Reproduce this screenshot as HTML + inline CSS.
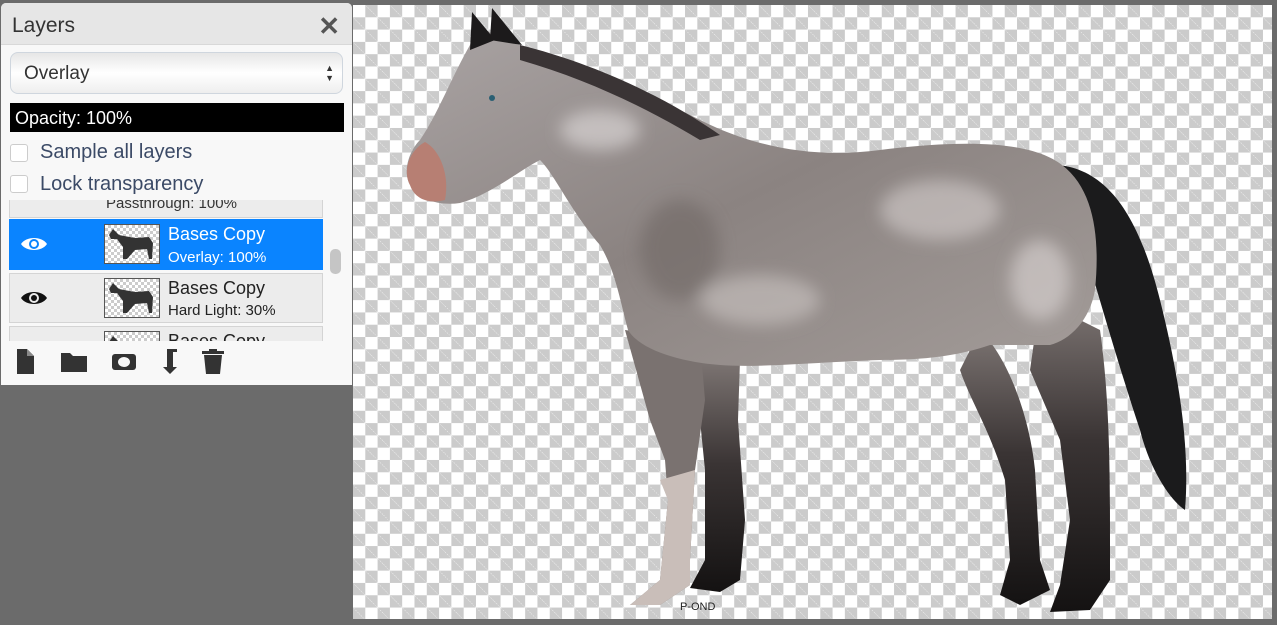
<!DOCTYPE html>
<html><head><meta charset="utf-8"><style>
body{margin:0;width:1277px;height:625px;background:#6b6b6b;position:relative;overflow:hidden;font-family:"Liberation Sans",sans-serif}
#cv{position:absolute;left:353px;top:5px;width:919px;height:614px;background-color:#fff;background-image:linear-gradient(45deg,#cbcbcb 25%,transparent 25%,transparent 75%,#cbcbcb 75%),linear-gradient(45deg,#cbcbcb 25%,transparent 25%,transparent 75%,#cbcbcb 75%);background-size:24.6px 24.6px;background-position:0 0,12.3px 12.3px}
#panel{position:absolute;left:1px;top:3px;width:351px;height:382px;background:#f8f8f8;border-radius:5px 5px 0 0}
#hd{height:41px;background:#e6e6e6;border-radius:5px 5px 0 0;border-bottom:1px solid #d8d8d8}
#hd span{position:absolute;left:11px;top:11px;font-size:21px;color:#333}
#x{position:absolute;right:12px;top:8px;font-size:26px;color:#555;font-weight:bold}
#sel{position:absolute;left:9px;top:49px;width:333px;height:42px;border:1px solid #cfd6de;border-radius:8px;background:linear-gradient(#e6e6e6,#fff 50%,#eee);box-sizing:border-box}
#sel span{position:absolute;left:13px;top:10px;font-size:19px;color:#333}
#sel i{position:absolute;right:8px;top:10px;font-style:normal;font-size:9px;line-height:10px;color:#333}
#op{position:absolute;left:9px;top:100px;width:334px;height:29px;background:#000;color:#fff;font-size:18px;line-height:30px;text-indent:5px}
.cb{position:absolute;left:9px;width:16px;height:16px;border:1px solid #ccc;border-radius:3px;background:#fff}
.cl{position:absolute;left:39px;font-size:20px;color:#3b4a66}
#list{position:absolute;left:8px;top:197px;width:315px;height:141px;overflow:hidden}
.row{position:absolute;left:0;width:314px;height:48px;background:#ececec;border:1px solid #d4d4d4;box-sizing:border-box}
.row.s{background:#0a84ff;border-color:#0a84ff;color:#fff}
.th{position:absolute;left:94px;top:4px;width:56px;height:40px;border:1px solid #555;background-color:#fff;background-image:linear-gradient(45deg,#ccc 25%,transparent 25%,transparent 75%,#ccc 75%),linear-gradient(45deg,#ccc 25%,transparent 25%,transparent 75%,#ccc 75%);background-size:6px 6px;background-position:0 0,3px 3px;box-sizing:border-box}
.th svg{position:absolute;left:0;top:0}
.n{position:absolute;left:158px;top:4px;font-size:18px}
.m{position:absolute;left:158px;top:27px;font-size:15px}
.eye{position:absolute;left:10px;top:15px}
#sb{position:absolute;left:329px;top:246px;width:11px;height:25px;background:#c5c5c5;border-radius:5px}
</style></head><body>
<div id="cv"></div>
<svg style="position:absolute;left:0;top:0" width="1277" height="625">
<defs>
<linearGradient id="bd" x1="0" y1="0" x2="1" y2="1"><stop offset="0" stop-color="#aaa4a4"/><stop offset=".5" stop-color="#8b8381"/><stop offset="1" stop-color="#a39c99"/></linearGradient>
<linearGradient id="lg" x1="0" y1="0" x2="0" y2="1"><stop offset="0" stop-color="#7d7573"/><stop offset=".45" stop-color="#3a3434"/><stop offset="1" stop-color="#141212"/></linearGradient>
<filter id="bl"><feGaussianBlur stdDeviation="8"/></filter>
</defs>
<path d="M1058 165 C1110 170 1140 220 1160 300 C1180 380 1190 450 1185 510 C1170 500 1150 470 1140 430 C1120 370 1100 300 1085 250 Z" fill="#1b1b1c"/>
<path d="M980 330 C1010 360 1030 420 1035 470 L1040 560 L1050 590 L1020 605 L1000 595 L1010 560 L1005 480 C990 430 970 400 960 370 Z" fill="url(#lg)"/>
<path d="M1040 300 L1100 330 C1110 400 1110 480 1110 540 L1110 580 L1090 610 L1050 612 L1060 585 L1070 520 L1060 440 L1030 370 Z" fill="url(#lg)"/>
<path d="M700 360 L740 360 L738 420 L745 520 L740 580 L720 592 L690 588 L705 560 L705 470 L700 420 Z" fill="url(#lg)"/>
<path d="M625 330 L700 340 L705 400 L695 470 L690 560 L690 585 L660 605 L630 605 L660 580 L668 500 L665 460 L650 420 Z" fill="#7a7270"/>
<path d="M660 480 L695 470 L690 560 L690 585 L660 605 L630 605 L660 580 L668 500 Z" fill="#c9beb9"/>
<path d="M470 45 L480 25 L500 40 L520 45 C600 70 660 100 700 120 C760 150 820 158 880 150 C960 140 1030 140 1062 165 C1095 190 1100 240 1095 290 C1090 320 1070 340 1050 345 L990 345 C960 355 930 360 880 360 C820 362 760 368 720 365 C680 362 640 350 628 330 C620 300 615 270 600 245 C570 210 555 175 540 160 C520 170 490 195 460 203 C440 206 418 200 410 185 C402 170 410 150 420 140 C440 110 450 80 470 45 Z" fill="url(#bd)"/>
<g filter="url(#bl)" opacity=".55">
<ellipse cx="600" cy="130" rx="40" ry="20" fill="#e8e4e4"/>
<ellipse cx="940" cy="210" rx="60" ry="30" fill="#d9d3d2"/>
<ellipse cx="760" cy="300" rx="60" ry="25" fill="#d0cac8"/>
<ellipse cx="680" cy="250" rx="40" ry="50" fill="#6e6664"/>
<ellipse cx="1040" cy="280" rx="30" ry="40" fill="#e2dcdb"/>
</g>
<path d="M410 185 C402 170 410 150 425 142 C440 150 450 175 445 200 C430 204 415 200 410 185 Z" fill="#b77f73"/>
<path d="M470 50 L472 12 L495 40 Z" fill="#1c1a1b"/>
<path d="M490 40 L492 8 L522 45 Z" fill="#1c1a1b"/>
<path d="M520 45 C600 65 670 100 720 135 L700 140 C650 110 590 80 520 60 Z" fill="#3a3435"/>
<circle cx="492" cy="98" r="3" fill="#2a5f73"/>
<text x="680" y="610" font-size="11" fill="#222" font-family="Liberation Sans">P-OND</text>
</svg>
<div id="panel">
<div id="hd"><span>Layers</span><div id="x">✕</div></div>
<div id="sel"><span>Overlay</span><i>▲<br>▼</i></div>
<div id="op">Opacity: 100%</div>
<div class="cb" style="top:141px"></div><div class="cl" style="top:138px">Sample all layers</div>
<div class="cb" style="top:172px"></div><div class="cl" style="top:170px">Lock transparency</div>
<div id="list">
<div class="row" style="top:-30px"><div class="m" style="left:96px;top:24px;color:#333">Passthrough: 100%</div></div>
<div class="row s" style="top:19px;height:51px"><svg class="eye" width="28" height="18" viewBox="0 0 28 18"><path d="M1 9 C6 1 22 1 27 9 C22 17 6 17 1 9Z" fill="#fff"/><circle cx="14" cy="9" r="5" fill="#0a84ff"/><circle cx="14" cy="9" r="3" fill="#fff"/></svg><div class="th"><svg width="54" height="38"><path d="M4 10 L8 4 L14 10 L30 13 L44 12 L48 18 L47 34 L44 34 L42 24 L30 25 L22 34 L18 34 L18 22 L12 14 L6 14 Z" fill="#333"/></svg></div><div class="n">Bases Copy</div><div class="m" style="top:29px">Overlay: 100%</div></div>
<div class="row" style="top:73px;height:50px"><svg class="eye" width="28" height="18" viewBox="0 0 28 18"><path d="M1 9 C6 1 22 1 27 9 C22 17 6 17 1 9Z" fill="#111"/><circle cx="14" cy="9" r="5" fill="#ececec"/><circle cx="14" cy="9" r="3" fill="#111"/></svg><div class="th"><svg width="54" height="38"><path d="M4 10 L8 4 L14 10 L30 13 L44 12 L48 18 L47 34 L44 34 L42 24 L30 25 L22 34 L18 34 L18 22 L12 14 L6 14 Z" fill="#333"/></svg></div><div class="n" style="color:#222">Bases Copy</div><div class="m" style="top:28px;color:#222">Hard Light: 30%</div></div>
<div class="row" style="top:126px"><div class="th"><svg width="54" height="38"><path d="M4 10 L8 4 L14 10 L30 13 L44 12 L48 18 Z" fill="#333"/></svg></div><div class="n" style="color:#222">Bases Copy</div></div>
</div>
<div id="sb"></div>
<svg style="position:absolute;left:14px;top:344px" width="220" height="28">
<path d="M2 2 H12 L19 9 V27 H2 Z" fill="#333"/><path d="M12 2 V9 H19" fill="#888"/>
<path d="M46 6 H55 L58 9 H72 V25 H46 Z" fill="#333"/>
<rect x="97" y="7" width="24" height="16" rx="3" fill="#333"/><ellipse cx="109" cy="15" rx="6" ry="5" fill="#f8f8f8"/>
<path d="M152 2 H162 V5 H158 V20 H162 L155 27 L148 20 H152 Z" fill="#333"/>
<rect x="187" y="4" width="22" height="3" fill="#333"/><rect x="194" y="2" width="8" height="3" fill="#333"/><path d="M189 8 H207 L205 27 H191 Z" fill="#333"/>
</svg>
</div>
</body></html>
